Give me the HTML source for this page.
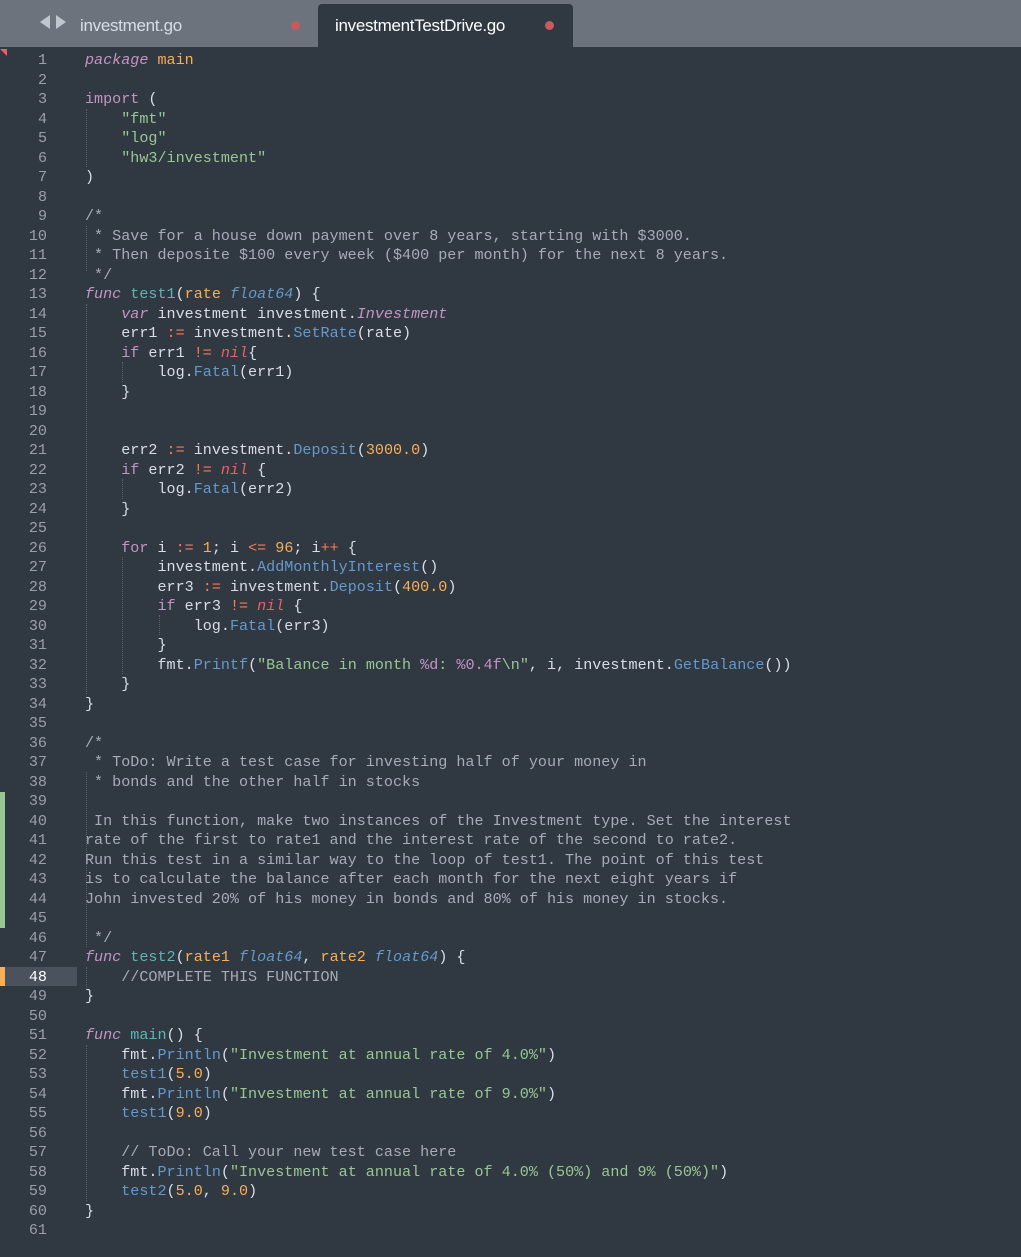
<!DOCTYPE html>
<html><head><meta charset="utf-8"><style>
html,body{margin:0;padding:0;}
body{width:1021px;height:1257px;background:#303841;position:relative;overflow:hidden;font-family:"Liberation Mono",monospace;}
.tabbar{position:absolute;left:0;top:0;width:1021px;height:47px;background:#6d737c;}
.tab{position:absolute;top:4px;height:43px;font-family:"Liberation Sans",sans-serif;font-size:17px;line-height:43px;letter-spacing:-0.3px;}
.t1{left:80px;color:#d8dee9;}
.t2{left:318px;width:255px;background:#303841;border-radius:4px 4px 0 0;color:#ffffff;padding-left:17px;box-sizing:border-box;}
.dot{position:absolute;width:9px;height:9px;border-radius:50%;background:#c8595f;top:21px;}
.arr{position:absolute;top:15px;width:0;height:0;border-top:7px solid transparent;border-bottom:7px solid transparent;}
.gut{position:absolute;left:0;top:51px;width:47px;text-align:right;color:#9aa0ab;font-size:15.1px;line-height:19.5px;white-space:pre;}
.code{position:absolute;left:85px;top:51px;color:#d8dee9;font-size:15.1px;line-height:19.5px;white-space:pre;}
.k{color:#c594c5}.i{font-style:italic}.f{color:#5fb4b4}.s{color:#99c794}.n{color:#f9ae58}.m{color:#6699cc}.o{color:#f97b58}.r{color:#ec5f66;font-style:italic}.p{color:#f9ae58}.t{color:#6699cc;font-style:italic}.c{color:#a6acb9}
.guide{position:absolute;width:0;border-left:1px dotted #5a626d;}
</style></head><body>
<div class="tabbar">
<div class="arr" style="left:40px;border-right:10px solid #c0c5ce;"></div>
<div class="arr" style="left:56px;border-left:10px solid #c0c5ce;"></div>
<div class="tab t1">investment.go</div>
<div class="dot" style="left:291px"></div>
<div class="tab t2">investmentTestDrive.go</div>
<div class="dot" style="left:545px"></div>
</div>
<div style="position:absolute;left:0;top:49px;width:0;height:0;border-left:7px solid transparent;border-top:7px solid #ec5f66;"></div>
<div style="position:absolute;left:0;top:792px;width:5px;height:136px;background:#99c794"></div>
<div style="position:absolute;left:0;top:967px;width:5px;height:19px;background:#f9ae58"></div>
<div style="position:absolute;left:5px;top:967px;width:72px;height:19px;background:#4a535d"></div>
<div class="guide" style="left:86px;top:109px;height:58px"></div>
<div class="guide" style="left:86px;top:226px;height:45px"></div>
<div class="guide" style="left:86px;top:304px;height:390px"></div>
<div class="guide" style="left:122px;top:362px;height:20px"></div>
<div class="guide" style="left:122px;top:479px;height:20px"></div>
<div class="guide" style="left:122px;top:557px;height:117px"></div>
<div class="guide" style="left:159px;top:615px;height:20px"></div>
<div class="guide" style="left:86px;top:772px;height:175px"></div>
<div class="guide" style="left:86px;top:967px;height:20px"></div>
<div class="guide" style="left:86px;top:1045px;height:156px"></div>
<div class="gut">1
2
3
4
5
6
7
8
9
10
11
12
13
14
15
16
17
18
19
20
21
22
23
24
25
26
27
28
29
30
31
32
33
34
35
36
37
38
39
40
41
42
43
44
45
46
47
<span style="color:#fff">48</span>
49
50
51
52
53
54
55
56
57
58
59
60
61</div>
<div class="code"><span class="k i">package</span> <span class="p">main</span>

<span class="k">import</span> (
    <span class="s">"fmt"</span>
    <span class="s">"log"</span>
    <span class="s">"hw3/investment"</span>
)

<span class="c">/*
 * Save for a house down payment over 8 years, starting with $3000.
 * Then deposite $100 every week ($400 per month) for the next 8 years.
 */</span>
<span class="k i">func</span> <span class="f">test1</span>(<span class="p">rate</span> <span class="t">float64</span>) {
    <span class="k i">var</span> investment investment.<span class="k i">Investment</span>
    err1 <span class="o">:=</span> investment.<span class="m">SetRate</span>(rate)
    <span class="k">if</span> err1 <span class="o">!=</span> <span class="r">nil</span>{
        log.<span class="m">Fatal</span>(err1)
    }


    err2 <span class="o">:=</span> investment.<span class="m">Deposit</span>(<span class="n">3000.0</span>)
    <span class="k">if</span> err2 <span class="o">!=</span> <span class="r">nil</span> {
        log.<span class="m">Fatal</span>(err2)
    }

    <span class="k">for</span> i <span class="o">:=</span> <span class="n">1</span>; i <span class="o">&lt;=</span> <span class="n">96</span>; i<span class="o">++</span> {
        investment.<span class="m">AddMonthlyInterest</span>()
        err3 <span class="o">:=</span> investment.<span class="m">Deposit</span>(<span class="n">400.0</span>)
        <span class="k">if</span> err3 <span class="o">!=</span> <span class="r">nil</span> {
            log.<span class="m">Fatal</span>(err3)
        }
        fmt.<span class="m">Printf</span>(<span class="s">"Balance in month </span><span class="k">%d</span><span class="s">: </span><span class="k">%0.4f</span><span class="s">\n"</span>, i, investment.<span class="m">GetBalance</span>())
    }
}

<span class="c">/*
 * ToDo: Write a test case for investing half of your money in
 * bonds and the other half in stocks

 In this function, make two instances of the Investment type. Set the interest
rate of the first to rate1 and the interest rate of the second to rate2.
Run this test in a similar way to the loop of test1. The point of this test
is to calculate the balance after each month for the next eight years if
John invested 20% of his money in bonds and 80% of his money in stocks.

 */</span>
<span class="k i">func</span> <span class="f">test2</span>(<span class="p">rate1</span> <span class="t">float64</span>, <span class="p">rate2</span> <span class="t">float64</span>) {
    <span class="c">//COMPLETE THIS FUNCTION</span>
}

<span class="k i">func</span> <span class="f">main</span>() {
    fmt.<span class="m">Println</span>(<span class="s">"Investment at annual rate of 4.0%"</span>)
    <span class="m">test1</span>(<span class="n">5.0</span>)
    fmt.<span class="m">Println</span>(<span class="s">"Investment at annual rate of 9.0%"</span>)
    <span class="m">test1</span>(<span class="n">9.0</span>)

    <span class="c">// ToDo: Call your new test case here</span>
    fmt.<span class="m">Println</span>(<span class="s">"Investment at annual rate of 4.0% (50%) and 9% (50%)"</span>)
    <span class="m">test2</span>(<span class="n">5.0</span>, <span class="n">9.0</span>)
}
</div>
</body></html>
